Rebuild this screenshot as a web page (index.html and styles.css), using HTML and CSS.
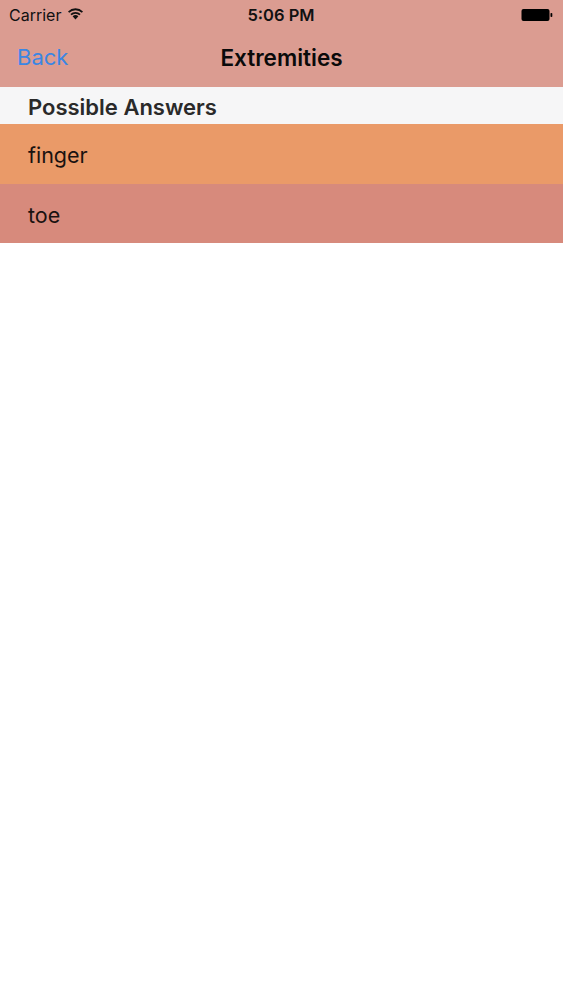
FILE: index.html
```html
<!DOCTYPE html>
<html>
<head>
<meta charset="utf-8">
<link rel="stylesheet" href="styles.css">
</head>
<body>
<div class="topbar">
  <div class="status">
    <div class="status-left">
      <span class="carrier">Carrier</span>
      <svg class="wifi" width="17" height="13" viewBox="0 0 17 13">
        <path d="M8.5 12.5 L5.6 9.2 A4.3 4.3 0 0 1 11.4 9.2 Z" fill="#111"/>
        <path d="M3.4 7.0 A7.4 7.4 0 0 1 13.6 7.0 L12.4 8.3 A5.6 5.6 0 0 0 4.6 8.3 Z" fill="#111"/>
        <path d="M1.0 4.4 A10.8 10.8 0 0 1 16.0 4.4 L14.8 5.7 A9.0 9.0 0 0 0 2.2 5.7 Z" fill="#111"/>
      </svg>
    </div>
    <div class="time">5:06 PM</div>
    <div class="status-right">
      <svg class="battery" width="32" height="14" viewBox="0 0 32 14">
        <rect x="0.5" y="1" width="28" height="12" rx="2" fill="#000"/>
        <rect x="29.5" y="5" width="1.8" height="4" rx="0.8" fill="#000"/>
      </svg>
    </div>
  </div>
  <div class="nav">
    <span class="back">Back</span>
    <span class="title">Extremities</span>
    <span class="spacer"></span>
  </div>
</div>
<div class="section-header">Possible Answers</div>
<div class="row row-finger">finger</div>
<div class="row row-toe">toe</div>
</body>
</html>
```
FILE: styles.css
```css
html, body {
  margin: 0;
  padding: 0;
  background: #ffffff;
  font-family: Inter, "Open Sans", "Liberation Sans", sans-serif;
}
.topbar {
  background: #db9c91;
  height: 87px;
}
.status {
  height: 29px;
  display: grid;
  grid-template-columns: 1fr auto 1fr;
  align-items: center;
  padding: 0 10px 0 9px;
}
.status-left {
  display: flex;
  align-items: center;
  gap: 6px;
}
.carrier {
  font-size: 16px;
  color: #111;
}
.wifi {
  display: block;
  margin-top: -2px;
}
.time {
  font-size: 16.5px;
  font-weight: 600;
  color: #111;
}
.status-right {
  display: flex;
  justify-content: flex-end;
}
.battery {
  display: block;
}
.nav {
  height: 58px;
  display: grid;
  grid-template-columns: 1fr auto 1fr;
  align-items: center;
  padding: 0 17px;
}
.back {
  color: #3a86e4;
  font-size: 22px;
  margin-top: -2px;
}
.title {
  font-size: 22.5px;
  font-weight: 600;
  color: #0a0a0a;
  margin-top: -2px;
}
.section-header {
  background: #f6f6f7;
  height: 37px;
  display: flex;
  align-items: center;
  padding-left: 28px;
  padding-top: 2px;
  box-sizing: border-box;
  font-size: 22px;
  font-weight: 600;
  color: #2a2a2a;
}
.row {
  display: flex;
  align-items: center;
  padding-left: 28px;
  padding-top: 2px;
  box-sizing: border-box;
  font-size: 21.5px;
  color: #1a1210;
}
.row-finger {
  background: #ea9a68;
  height: 60px;
}
.row-toe {
  background: #d78a7c;
  height: 59px;
}
```
